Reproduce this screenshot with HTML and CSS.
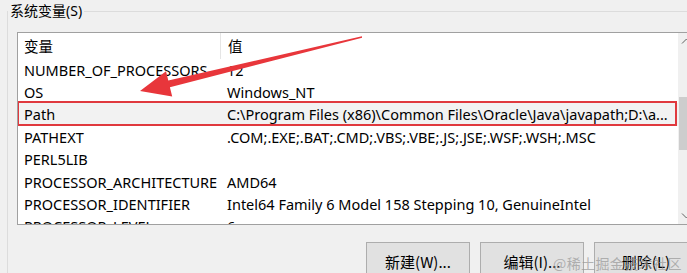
FILE: index.html
```html
<!DOCTYPE html>
<html lang="zh-CN">
<head>
<meta charset="utf-8">
<title>系统变量</title>
<link rel="stylesheet" href="styles.css">
</head>
<body>
<fieldset class="group">
  <legend class="group-title">系统变量(S)</legend>
  <div class="listbox">
    <div class="list-main">
      <div class="row header">
        <div class="cell name">变量</div>
        <div class="cell value col-sep">值</div>
      </div>
      <div class="row"><div class="cell name">NUMBER_OF_PROCESSORS</div><div class="cell value">12</div></div>
      <div class="row"><div class="cell name">OS</div><div class="cell value">Windows_NT</div></div>
      <div class="row selected"><div class="cell name">Path</div><div class="cell value">C:\Program Files (x86)\Common Files\Oracle\Java\javapath;D:\a...</div></div>
      <div class="row"><div class="cell name">PATHEXT</div><div class="cell value">.COM;.EXE;.BAT;.CMD;.VBS;.VBE;.JS;.JSE;.WSF;.WSH;.MSC</div></div>
      <div class="row"><div class="cell name">PERL5LIB</div><div class="cell value"></div></div>
      <div class="row"><div class="cell name">PROCESSOR_ARCHITECTURE</div><div class="cell value">AMD64</div></div>
      <div class="row"><div class="cell name">PROCESSOR_IDENTIFIER</div><div class="cell value">Intel64 Family 6 Model 158 Stepping 10, GenuineIntel</div></div>
      <div class="row"><div class="cell name">PROCESSOR_LEVEL</div><div class="cell value">6</div></div>
    </div>
    <div class="scrollbar">
      <svg class="sb-arrow" width="17" height="17" viewBox="0 0 17 17"><path d="M4 10.5 L8.5 6 L13 10.5" fill="none" stroke="#606060" stroke-width="1"/></svg>
      <div class="sb-track"><div class="sb-thumb"></div></div>
      <svg class="sb-arrow" width="17" height="17" viewBox="0 0 17 17"><path d="M4 6.5 L8.5 11 L13 6.5" fill="none" stroke="#606060" stroke-width="1"/></svg>
    </div>
  </div>
  <div class="buttons">
    <button class="btn">新建(W)...</button>
    <button class="btn">编辑(I)...</button>
    <button class="btn">删除(L)</button>
  </div>
</fieldset>
<div class="watermark">@稀土掘金技术社区</div>
<svg class="arrow" width="687" height="273" viewBox="0 0 687 273">
  <polygon points="361.9,36.3 168.3,80.5 166,71.3 140,91 172.2,96.5 169.9,87.3 362.1,37.7" fill="#e8363b"/>
</svg>
</body>
</html>
```
FILE: styles.css
```css
html, body {
  margin: 0;
  padding: 0;
}
body {
  width: 687px;
  height: 273px;
  overflow: hidden;
  background: #f0f0f0;
  font-family: "Noto Sans", "Noto Sans CJK SC", sans-serif;
  font-size: 14.5px;
  color: #000;
  position: relative;
}
.group {
  margin: 0 0 0 7px;
  padding: 0;
  border: 1px solid #dcdcdc;
  border-right: none;
  border-bottom: none;
  width: 700px;
  min-width: 0;
  box-sizing: border-box;
  height: 300px;
}
.group-title {
  padding: 0 2px;
  margin-left: 0;
  font-size: 14px;
  line-height: 22px;
  color: #000;
}
.listbox {
  margin: 10px 0 0 9px;
  width: 678px;
  height: 193px;
  border: 1px solid #a0a0a0;
  border-right: none;
  background: #fff;
  display: flex;
  overflow: hidden;
  box-sizing: border-box;
}
.list-main {
  flex: 1;
  display: flex;
  flex-direction: column;
  overflow: hidden;
}
.row {
  display: grid;
  grid-template-columns: 202px 1fr;
  height: 22.4px;
  flex: none;
  align-items: center;
  white-space: nowrap;
  position: relative;
}
.row.header {
  height: 25.5px;
}
.cell {
  overflow: hidden;
}
.cell.name {
  padding-left: 6px;
}
.cell.value {
  padding-left: 7px;
}
.col-sep {
  border-left: 1px solid #e5e5e5;
  height: 100%;
  display: flex;
  align-items: center;
  box-sizing: border-box;
  padding-left: 6px;
}
.row.selected {
  background: #f2f2f2;
}
.row.selected::after {
  content: "";
  position: absolute;
  left: -1px;
  right: 1px;
  top: -2px;
  bottom: 0;
  border: 2px solid #e0393e;
}
.scrollbar {
  width: 17px;
  flex: none;
  background: #f0f0f0;
  display: flex;
  flex-direction: column;
}
.sb-arrow {
  display: block;
  flex: none;
}
.sb-track {
  flex: 1;
  padding-top: 47px;
}
.sb-thumb {
  height: 53px;
  background: #cdcdcd;
  margin: 0 1px;
}
.buttons {
  display: flex;
  gap: 10px;
  margin: 17px 0 0 358px;
}
.btn {
  width: 104px;
  height: 38px;
  background: #e1e1e1;
  border: 1px solid #adadad;
  font-family: "Noto Sans CJK SC", "Noto Sans", sans-serif;
  font-size: 15px;
  color: #000;
  padding: 0;
  flex: none;
}
.watermark {
  position: absolute;
  left: 553px;
  top: 253px;
  font-family: "Noto Sans CJK SC", sans-serif;
  font-size: 14px;
  color: rgba(150, 150, 150, 0.7);
  letter-spacing: 0.4px;
  pointer-events: none;
}
.arrow {
  position: absolute;
  left: 0;
  top: 0;
  pointer-events: none;
}
```
